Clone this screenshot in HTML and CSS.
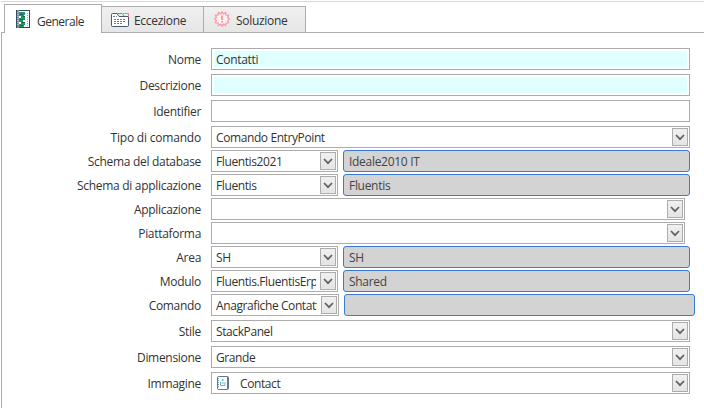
FILE: index.html
```html
<!DOCTYPE html>
<html lang="it">
<head>
<meta charset="utf-8">
<title>Contatti</title>
<link rel="stylesheet" href="styles.css">
</head>
<body>
<svg class="defs" width="0" height="0"><symbol id="chev" viewBox="0 0 10 7"><path d="M1 1 5 5.200 9 1" fill="none" stroke="#606060" stroke-width="1.700"/></symbol></svg>
<nav class="tabs">
  <div class="tab active">
    <svg class="ico-main" width="14" height="18" viewBox="0 0 14 18"><rect x=".5" y=".5" width="13" height="17" fill="#fff" stroke="#344a60"/><path d="M1 0h2v18H1z" fill="#7b8b9a"/><path d="M2 2v14" stroke="#dde3e8" stroke-dasharray="1 1"/><path d="M3 2h6v3H8v2h1v3H7v2h2v3H8v2H3v-3h2v-2H3V8h2V6H3z" fill="#14a05a"/><path d="M4 4h3v1H4zM7 6h2v1H7zM4 9h3v1H4zM6 12h3v1H6zM4 15h3v1H4z" fill="#344a60"/><path d="M11.500 3v13" stroke="#9ba8b4" stroke-dasharray="1 1"/></svg>
    <span>Generale</span>
  </div>
  <div class="tab second">
    <svg width="18" height="14" viewBox="0 0 18 14"><path d="M.5 12.500v-11q0-1 1-1H6l2 3h9.500v9q0 1-1 1h-15q-1 0-1-1z" fill="#fff" stroke="#4a5b70"/><path d="M6.500 .5H11l2 2.500" fill="none" stroke="#35b879"/><path d="M12 .5h5.500V4" fill="none" stroke="#f67f8e"/><path d="M2 3.500h4M3 6.500h12M3 8.500h12M3 10.500h8" stroke="#718092" stroke-dasharray="2 1"/></svg>
    <span>Eccezione</span>
  </div>
  <div class="tab third">
    <svg width="16" height="16" viewBox="0 0 16 16"><path d="m8 .8 1.300 2 2.300-1.300.2 2.400 2.700.3-.9 2.300 1.900 1.500-1.900 1.500.9 2.300-2.700.3-.2 2.400-2.300-1.300-1.300 2-1.300-2-2.300 1.300-.2-2.400-2.700-.3.900-2.300L.5 8l1.900-1.500-.9-2.300 2.700-.3.200-2.400 2.300 1.300z" fill="#fff1f2" stroke="#f99aa6" stroke-width="1.300"/><path d="M8 4.500v4.500M8 10v1.500" stroke="#f67f8e" stroke-width="1.500"/></svg>
    <span>Soluzione</span>
  </div>
</nav>
<main class="panel">
  <div class="row gap"><label>Nome</label><div class="box cyan"><span>Contatti</span></div></div>
  <div class="row gap"><label>Descrizione</label><div class="box cyan"></div></div>
  <div class="row gap"><label>Identifier</label><div class="box"></div></div>
  <div class="row"><label class="loose">Tipo di comando</label><div class="box"><span>Comando EntryPoint</span><i><svg><use href="#chev"/></svg></i></div></div>
  <div class="row"><label>Schema del database</label><div class="box small"><span>Fluentis2021</span><i><svg><use href="#chev"/></svg></i></div><div class="info">Ideale2010 IT</div></div>
  <div class="row"><label>Schema di applicazione</label><div class="box small"><span>Fluentis</span><i><svg><use href="#chev"/></svg></i></div><div class="info">Fluentis</div></div>
  <div class="row"><label>Applicazione</label><div class="box short"><span></span><i><svg><use href="#chev"/></svg></i></div></div>
  <div class="row"><label>Piattaforma</label><div class="box short"><span></span><i><svg><use href="#chev"/></svg></i></div></div>
  <div class="row"><label>Area</label><div class="box small"><span>SH</span><i><svg><use href="#chev"/></svg></i></div><div class="info">SH</div></div>
  <div class="row"><label>Modulo</label><div class="box small"><span>Fluentis.FluentisErp</span><i><svg><use href="#chev"/></svg></i></div><div class="info">Shared</div></div>
  <div class="row gap"><label>Comando</label><div class="box small wider"><span>Anagrafiche Contatti</span><i><svg><use href="#chev"/></svg></i></div><div class="info long"></div></div>
  <div class="row gap"><label>Stile</label><div class="box"><span>StackPanel</span><i><svg><use href="#chev"/></svg></i></div></div>
  <div class="row gap"><label>Dimensione</label><div class="box"><span>Grande</span><i><svg><use href="#chev"/></svg></i></div></div>
  <div class="row"><label>Immagine</label><div class="box"><svg class="contact" width="12" height="14" viewBox="0 0 12 14"><rect x=".5" y=".5" width="11" height="13" rx="1" fill="#fff" stroke="#63788f"/><path d="M10.500 1v12" stroke="#63788f"/><path d="M1.500 2v10" stroke="#8496a8" stroke-dasharray="1 1"/><path d="M3.500 6v3.500h4.500V6" fill="none" stroke="#62bdd0"/><circle cx="5.700" cy="4" r="1" fill="#62bdd0"/><path d="M4.500 7h2.500" stroke="#62bdd0"/></svg><span>Contact</span><i><svg><use href="#chev"/></svg></i></div></div>
</main>
</body>
</html>
```
FILE: styles.css
```css
* { box-sizing: border-box; }
body { margin: 0; width: 704px; height: 408px; overflow: hidden; display: flex; flex-direction: column; background: #fff; color: #333; font: 12px/20px "Open Sans", "Noto Sans", sans-serif; letter-spacing: -0.3px; }
.defs { position: absolute; }
.tabs { height: 32px; flex: none; display: flex; align-items: flex-end; margin: 1px 0 0 1px; padding-left: 3px; border-top: 1px solid #d9d9d9; background: linear-gradient(#acacac, #acacac) bottom / 100% 1px no-repeat; }
.tab { height: 27px; width: 102px; flex: none; display: flex; align-items: center; border: 1px solid #acacac; border-left: 0; background: linear-gradient(#f0f0f0, #e6e6e6); white-space: nowrap; }
.tab.active { width: 98px; height: 29px; border-left: 1px solid #acacac; border-bottom: 0; background: #fff; padding: 2px 0 0 11px; gap: 7px; letter-spacing: -0.5px; }
.second { padding-left: 9px; gap: 5px; }
.third { padding-left: 10px; gap: 6px; }
.tab svg { flex: none; }
.ico-main { margin-top: -2px; }
.third svg { margin-top: -1px; }
.tab span { padding-top: 3px; }
.tab.active span { padding-top: 3px; }
.panel { flex: 1; margin-left: 1px; border-left: 1px solid #acacac; padding-top: 15px; }
.row { display: flex; height: 22px; margin-bottom: 2px; }
.row.gap { margin-bottom: 4px; }
label { width: 199px; margin-right: 10px; text-align: right; white-space: nowrap; line-height: 24px; }
.loose { letter-spacing: -0.2px; }
.box { width: 479px; height: 22px; border: 1px solid #acacac; display: flex; padding: 1px 1px 1px 4px; line-height: 20px; letter-spacing: -0.4px; background: #fff; }
.box > span { flex: 1; overflow: hidden; white-space: nowrap; margin-right: 4px; }
.cyan { padding: 2px; background: linear-gradient(#e0ffff, #e0ffff) content-box; letter-spacing: -0.3px; }
.cyan > span { padding-left: 2px; line-height: 18px; }
.short { width: 474px; }
.small { width: 127px; }
.wider { width: 128px; }
.box i { width: 16px; height: 18px; flex: none; border: 1px solid #acacac; background: linear-gradient(#f0f0f0, #e5e5e5); display: flex; align-items: center; justify-content: center; }
.box i svg { width: 10px; height: 7px; }
.info { width: 347px; margin-left: 5px; height: 22px; background: #d3d3d3; border: 1px solid #3a7bd5; border-radius: 3px; padding-left: 5px; line-height: 21px; color: #444; }
.long { width: 351px; }
.contact { margin: 2px 11px 0 1px; flex: none; }
```
